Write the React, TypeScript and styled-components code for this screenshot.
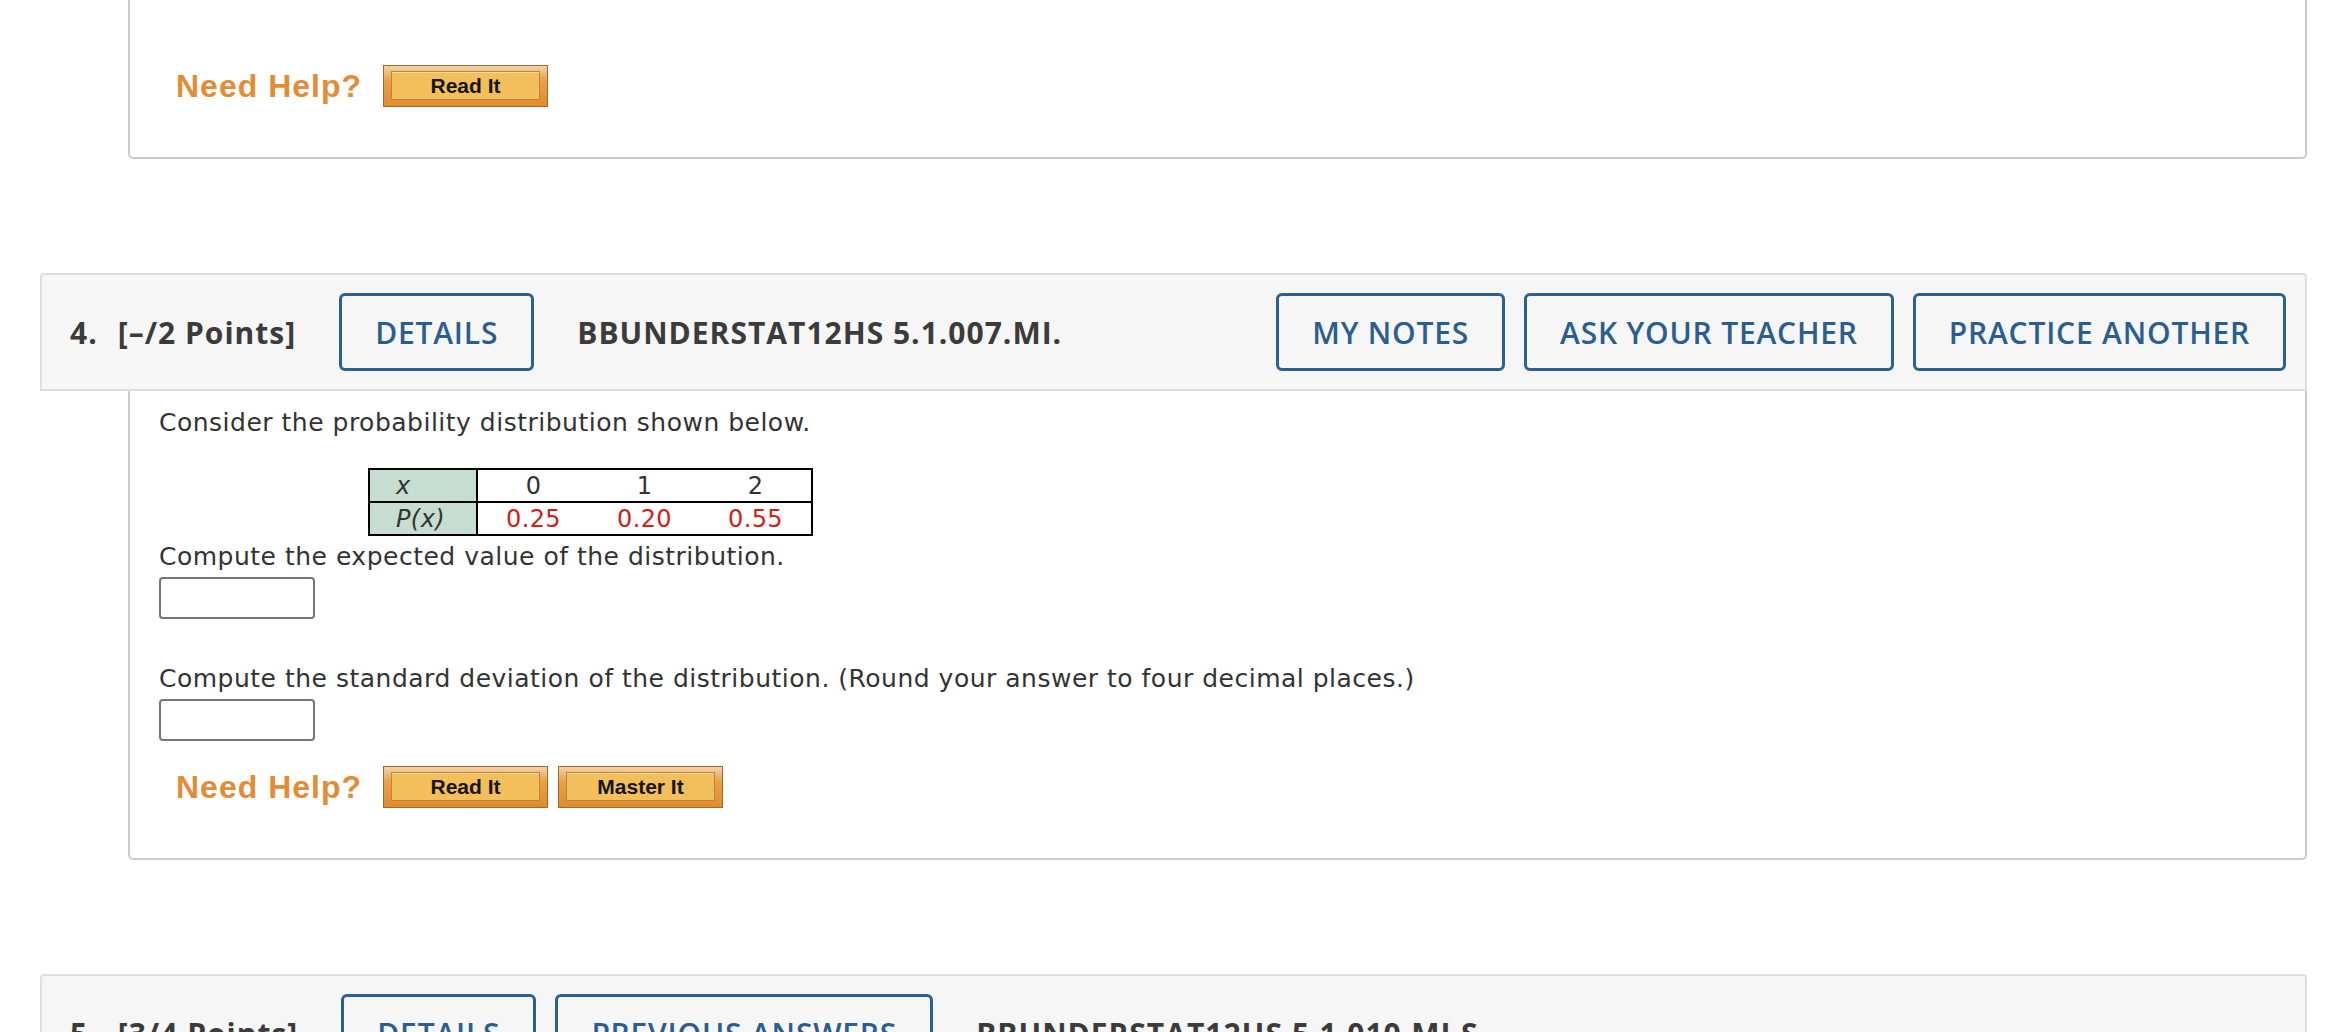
import styled, { createGlobalStyle } from "styled-components";

const GlobalStyle = createGlobalStyle`
  body {
    margin: 0;
    background: #ffffff;
    font-family: "DejaVu Sans", Verdana, sans-serif;
    color: #333333;
  }
`;

const Page = styled.div`
  display: flex;
  flex-direction: column;
  gap: 114px;
  padding: 0 31px 0 40px;
`;

const QuestionBlock = styled.section`
  display: flex;
  flex-direction: column;
`;

const QuestionHeader = styled.header`
  display: flex;
  align-items: center;
  gap: 43px;
  height: 118px;
  box-sizing: border-box;
  padding: 0 19px 0 28px;
  background: #f6f6f6;
  border: 2px solid #dedede;
  border-radius: 4px 4px 0 0;
  font-family: "Open Sans", "Liberation Sans", sans-serif;
  color: #3b3b3b;
`;

const QuestionNumber = styled.h2`
  margin: 0;
  font-size: 30px;
  font-weight: 700;
  letter-spacing: 1px;
  white-space: nowrap;

  span {
    margin-left: 20px;
  }
`;

const QuestionTitle = styled.h3`
  margin: 0;
  font-size: 30px;
  font-weight: 700;
  letter-spacing: 1px;
  white-space: nowrap;
`;

const ButtonGroup = styled.div<{ $right?: boolean }>`
  display: flex;
  gap: 19px;
  margin-left: ${({ $right }) => ($right ? "auto" : "0")};
`;

const OutlineButton = styled.button`
  height: 78px;
  box-sizing: border-box;
  padding: 0 33px;
  background: transparent;
  border: 3px solid #2b6092;
  border-radius: 6px;
  font-family: "Open Sans", "Liberation Sans", sans-serif;
  font-size: 30px;
  font-weight: 600;
  letter-spacing: 0.8px;
  color: #2b5e90;
  white-space: nowrap;
  cursor: pointer;
`;

const QuestionBody = styled.div<{ $open?: boolean }>`
  margin-left: 88px;
  border: 2px solid #cccccc;
  border-top: ${({ $open }) => ($open ? "none" : "0")};
  border-radius: 0 0 5px 5px;
  padding: ${({ $open }) => ($open ? "65px 29px 50px" : "14px 29px 50px")};
  font-size: 25px;
  letter-spacing: 0.5px;
  line-height: 36px;
`;

const Prompt = styled.p`
  margin: 0;
`;

const DistTable = styled.table`
  margin: 27px 0 3px 209px;
  border-collapse: collapse;
  border: 2px solid #000000;
  font-size: 24px;
  letter-spacing: 0.4px;
  line-height: 30px;

  tr + tr td {
    border-top: 2px solid #000000;
  }
`;

const LabelCell = styled.td`
  width: 80px;
  padding: 1px 0 0 26px;
  background: #c5ded1;
  border-right: 2px solid #000000;
  font-style: italic;
  text-align: left;
`;

const ValueCell = styled.td<{ $red?: boolean }>`
  width: 111px;
  padding: 1px 0 0;
  text-align: center;
  color: ${({ $red }) => ($red ? "#cc2418" : "#333333")};
`;

const AnswerInput = styled.input`
  display: block;
  width: 156px;
  height: 42px;
  box-sizing: border-box;
  margin: 2px 0 0;
  border: 2px solid #767676;
  border-radius: 4px;
  background: #ffffff;
`;

const Gap = styled.div<{ $h: number }>`
  height: ${({ $h }) => $h}px;
`;

const HelpRow = styled.div`
  display: flex;
  align-items: center;
  gap: 10px;
  margin-left: 17px;
`;

const HelpLabel = styled.span`
  margin-right: 11px;
  font-family: "Liberation Sans", Arial, sans-serif;
  font-size: 32px;
  font-weight: 700;
  line-height: 42px;
  color: #e38c36;
  letter-spacing: 1px;
`;

const HelpButton = styled.button`
  width: 165px;
  height: 42px;
  box-sizing: border-box;
  padding: 5px 7px 6px;
  border: 1px solid #9a6b2f;
  background: linear-gradient(#f6d3a6 0%, #eba04a 35%, #e38a2c 100%);
  cursor: pointer;

  span {
    display: flex;
    align-items: center;
    justify-content: center;
    height: 100%;
    box-sizing: border-box;
    background: #f3bf5a;
    border: 1px solid #b88643;
    box-shadow: inset 0 1px 0 #f9dd9c;
    font-family: "Liberation Sans", Arial, sans-serif;
    font-size: 21px;
    font-weight: 700;
    color: #151515;
  }
`;

interface Question {
  num: string;
  points: string;
  leftButtons: string[];
  title: string;
  rightButtons: string[];
}

const questions: Question[] = [
  {
    num: "4.",
    points: "[–/2 Points]",
    leftButtons: ["DETAILS"],
    title: "BBUNDERSTAT12HS 5.1.007.MI.",
    rightButtons: ["MY NOTES", "ASK YOUR TEACHER", "PRACTICE ANOTHER"],
  },
  {
    num: "5.",
    points: "[3/4 Points]",
    leftButtons: ["DETAILS", "PREVIOUS ANSWERS"],
    title: "BBUNDERSTAT12HS 5.1.010.MI.S.",
    rightButtons: [],
  },
];

const dist = [
  { x: "0", p: "0.25" },
  { x: "1", p: "0.20" },
  { x: "2", p: "0.55" },
];

const Header = ({ q }: { q: Question }) => (
  <QuestionHeader>
    <QuestionNumber>
      {q.num}
      <span>{q.points}</span>
    </QuestionNumber>
    <ButtonGroup>
      {q.leftButtons.map((b) => (
        <OutlineButton key={b}>{b}</OutlineButton>
      ))}
    </ButtonGroup>
    <QuestionTitle>{q.title}</QuestionTitle>
    {q.rightButtons.length > 0 && (
      <ButtonGroup $right>
        {q.rightButtons.map((b) => (
          <OutlineButton key={b}>{b}</OutlineButton>
        ))}
      </ButtonGroup>
    )}
  </QuestionHeader>
);

const NeedHelp = ({ buttons }: { buttons: string[] }) => (
  <HelpRow>
    <HelpLabel>Need Help?</HelpLabel>
    {buttons.map((b) => (
      <HelpButton key={b}>
        <span>{b}</span>
      </HelpButton>
    ))}
  </HelpRow>
);

export default function App() {
  return (
    <>
      <GlobalStyle />
      <Page>
        <QuestionBody $open>
          <NeedHelp buttons={["Read It"]} />
        </QuestionBody>

        <QuestionBlock>
          <Header q={questions[0]} />
          <QuestionBody>
            <Prompt>Consider the probability distribution shown below.</Prompt>
            <DistTable>
              <tbody>
                <tr>
                  <LabelCell>x</LabelCell>
                  {dist.map((d) => (
                    <ValueCell key={d.x}>{d.x}</ValueCell>
                  ))}
                </tr>
                <tr>
                  <LabelCell>P(x)</LabelCell>
                  {dist.map((d) => (
                    <ValueCell key={d.x} $red>
                      {d.p}
                    </ValueCell>
                  ))}
                </tr>
              </tbody>
            </DistTable>
            <Prompt>Compute the expected value of the distribution.</Prompt>
            <AnswerInput type="text" />
            <Gap $h={42} />
            <Prompt>
              Compute the standard deviation of the distribution. (Round your
              answer to four decimal places.)
            </Prompt>
            <AnswerInput type="text" />
            <Gap $h={25} />
            <NeedHelp buttons={["Read It", "Master It"]} />
          </QuestionBody>
        </QuestionBlock>

        <QuestionBlock>
          <Header q={questions[1]} />
        </QuestionBlock>
      </Page>
    </>
  );
}
